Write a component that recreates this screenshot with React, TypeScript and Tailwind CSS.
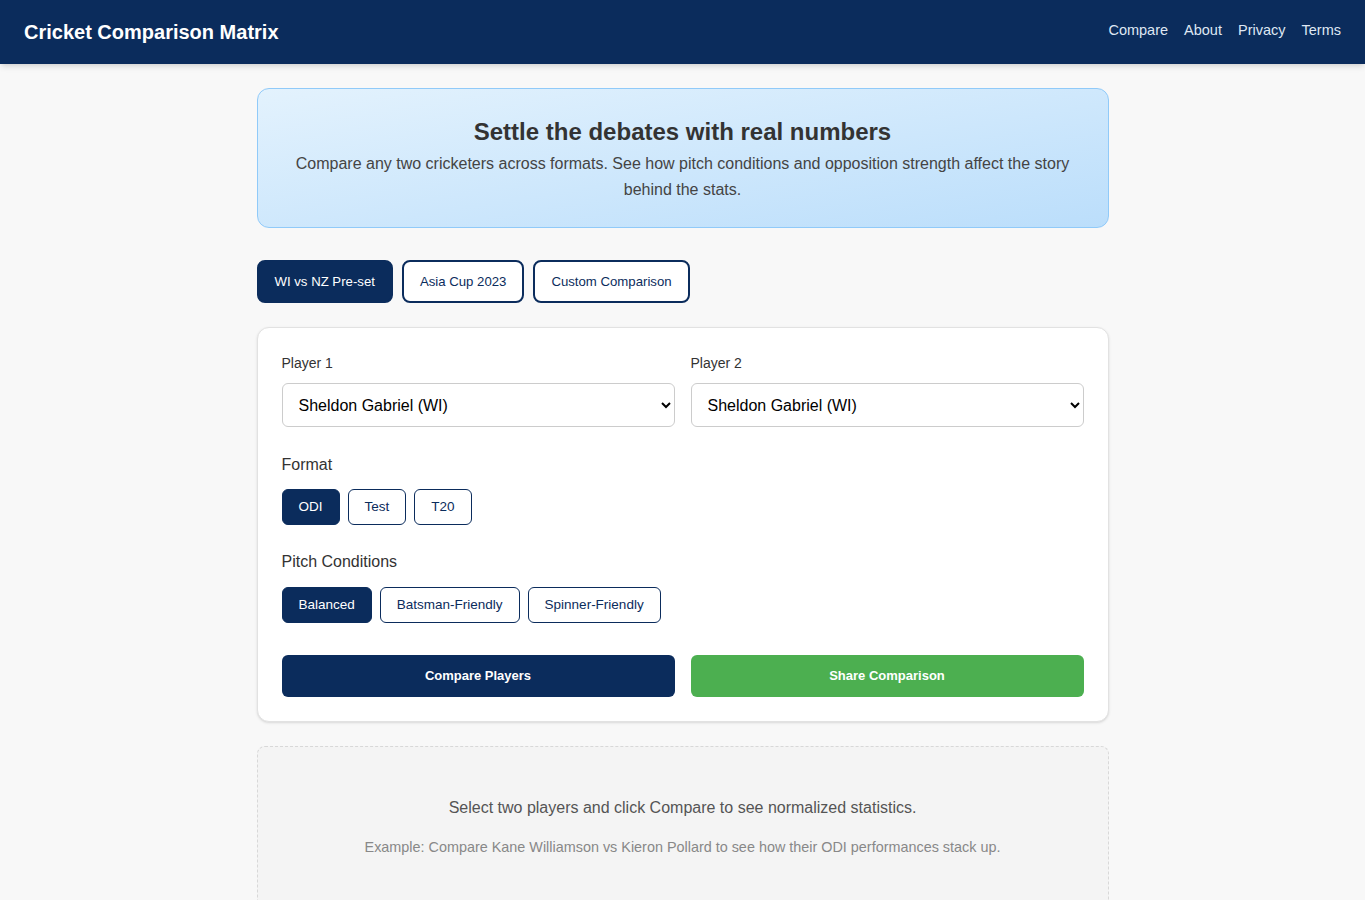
import { useState } from "react";

const players = ["Sheldon Gabriel (WI)", "Kane Williamson (NZ)", "Kieron Pollard (WI)"];

function Pill({
  label,
  active,
  onClick,
}: {
  label: string;
  active: boolean;
  onClick: () => void;
}) {
  return (
    <button
      onClick={onClick}
      className={`h-[36px] px-4 rounded-md border border-[#0b2c5c] text-[13.5px] ${
        active ? "bg-[#0b2c5c] text-white" : "bg-white text-[#0b2c5c]"
      }`}
    >
      {label}
    </button>
  );
}

export default function App() {
  const [preset, setPreset] = useState("WI vs NZ Pre-set");
  const [format, setFormat] = useState("ODI");
  const [pitch, setPitch] = useState("Balanced");

  return (
    <div className="min-h-screen bg-[#f8f8f8] font-['Liberation_Sans',Arial,sans-serif] text-[#333]">
      <header className="h-16 bg-[#0b2c5c] flex items-center justify-between px-6 shadow-md">
        <h1 className="text-[20px] font-bold text-white">Cricket Comparison Matrix</h1>
        <nav className="flex gap-4 text-[14.5px] text-[#dfe7f3] -mt-[2px]">
          <a>Compare</a>
          <a>About</a>
          <a>Privacy</a>
          <a>Terms</a>
        </nav>
      </header>

      <main className="max-w-[852px] mx-auto pt-6">
        <section className="rounded-xl border border-[#90caf9] bg-gradient-to-br from-[#e3f2fd] to-[#bbdefb] px-6 pt-[27px] pb-[24px] text-center">
          <h2 className="text-[24px] font-bold text-[#333] leading-[32px]">
            Settle the debates with real numbers
          </h2>
          <p className="mt-[3px] text-[16px] leading-[26px] text-[#444]">
            Compare any two cricketers across formats. See how pitch conditions and opposition
            strength affect the story behind the stats.
          </p>
        </section>

        <div className="flex gap-[9px] mt-8">
          {["WI vs NZ Pre-set", "Asia Cup 2023", "Custom Comparison"].map((t) => (
            <button
              key={t}
              onClick={() => setPreset(t)}
              className={`h-[43px] px-[16px] rounded-lg border-2 border-[#0b2c5c] text-[13.2px] ${
                preset === t ? "bg-[#0b2c5c] text-white" : "bg-white text-[#0b2c5c]"
              }`}
            >
              {t}
            </button>
          ))}
        </div>

        <section className="mt-6 bg-white border border-[#e2e2e2] rounded-xl p-6 shadow-sm">
          <div className="grid grid-cols-2 gap-4">
            {["Player 1", "Player 2"].map((l) => (
              <div key={l}>
                <label className="block text-[14px] text-[#333] mt-[1px] mb-[9px]">{l}</label>
                <select className="w-full h-[44px] px-3 rounded-md border border-[#ccc] bg-white text-[16px] text-black">
                  {players.map((p) => (
                    <option key={p}>{p}</option>
                  ))}
                </select>
              </div>
            ))}
          </div>

          <div className="mt-[26px] text-[16px] text-[#333]">Format</div>
          <div className="flex gap-2 mt-[12px]">
            {["ODI", "Test", "T20"].map((f) => (
              <Pill key={f} label={f} active={format === f} onClick={() => setFormat(f)} />
            ))}
          </div>

          <div className="mt-[25px] text-[16px] text-[#333]">Pitch Conditions</div>
          <div className="flex gap-2 mt-[13px]">
            {["Balanced", "Batsman-Friendly", "Spinner-Friendly"].map((p) => (
              <Pill key={p} label={p} active={pitch === p} onClick={() => setPitch(p)} />
            ))}
          </div>

          <div className="grid grid-cols-2 gap-4 mt-[32px]">
            <button className="h-[42px] rounded-md bg-[#0b2c5c] text-white text-[13px] font-bold">
              Compare Players
            </button>
            <button className="h-[42px] rounded-md bg-[#4caf50] text-white text-[13px] font-bold">
              Share Comparison
            </button>
          </div>
        </section>

        <section className="mt-[24px] rounded-lg border border-dashed border-[#d8d8d8] bg-[#f4f4f4] pt-[49px] pb-[50px] text-center">
          <p className="text-[16px] text-[#555]">
            Select two players and click Compare to see normalized statistics.
          </p>
          <p className="mt-[17px] text-[14.4px] text-[#888]">
            Example: Compare Kane Williamson vs Kieron Pollard to see how their ODI performances
            stack up.
          </p>
        </section>
      </main>
    </div>
  );
}
